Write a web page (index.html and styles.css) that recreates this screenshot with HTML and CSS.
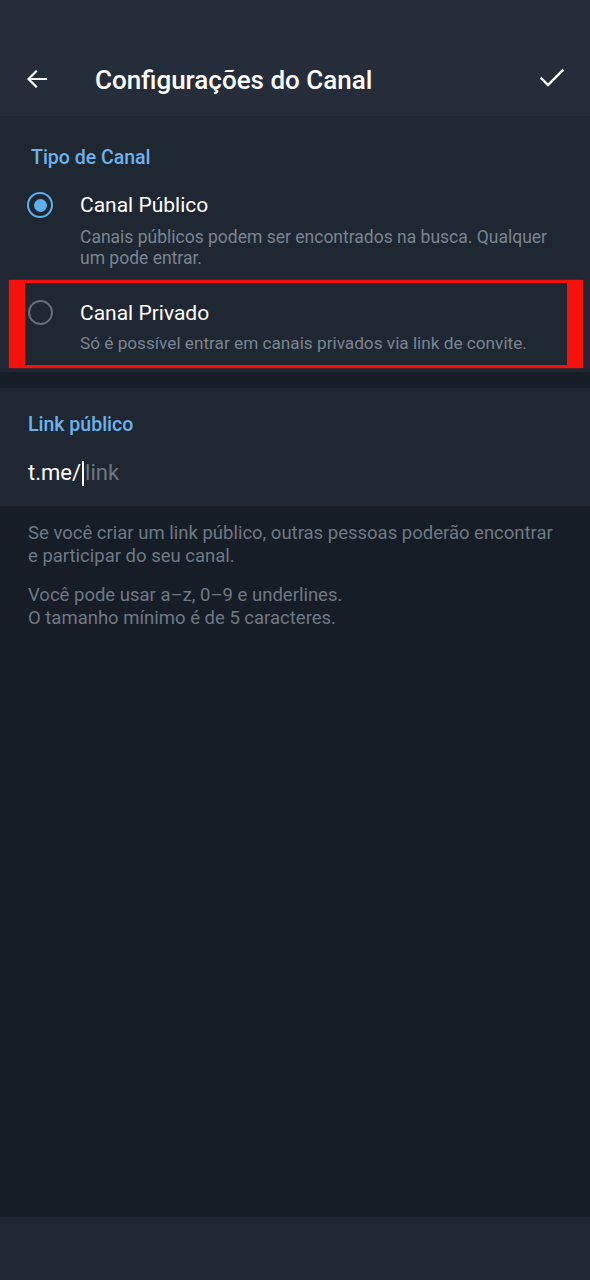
FILE: index.html
```html
<!DOCTYPE html>
<html lang="pt">
<head>
<meta charset="utf-8">
<title>Configurações do Canal</title>
<link rel="stylesheet" href="styles.css">
</head>
<body>
<div class="screen">
  <header class="appbar">
    <div class="toolbar">
      <button class="icon-btn back" aria-label="Voltar">
        <svg width="24" height="24" viewBox="0 0 24 24"><path d="M21 12H4M11 4.5L3.5 12L11 19.5" fill="none" stroke="#fff" stroke-width="2.2" stroke-linecap="square"/></svg>
      </button>
      <h1 class="title">Configurações do Canal</h1>
      <button class="icon-btn done" aria-label="Concluir">
        <svg width="26" height="26" viewBox="0 0 26 26"><path d="M2.5 13.5L9 20L23.5 5.5" fill="none" stroke="#fff" stroke-width="2.4" stroke-linecap="square"/></svg>
      </button>
    </div>
  </header>

  <main class="content">
    <section class="card type-card">
      <h2 class="section-title">Tipo de Canal</h2>
      <div class="option option-public">
        <span class="radio radio-on"><span class="dot"></span></span>
        <div class="option-text">
          <div class="option-title">Canal Público</div>
          <div class="option-desc">Canais públicos podem ser encontrados na busca. Qualquer um pode entrar.</div>
        </div>
      </div>
      <div class="option option-private">
        <span class="radio radio-off"></span>
        <div class="option-text">
          <div class="option-title">Canal Privado</div>
          <div class="option-desc">Só é possível entrar em canais privados via link de convite.</div>
        </div>
        <span class="highlight"></span>
      </div>
    </section>

    <section class="card link-card">
      <h2 class="section-title">Link público</h2>
      <div class="link-input"><span class="prefix">t.me/</span><span class="caret"></span><span class="placeholder">link</span></div>
    </section>

    <div class="help">
      <p>Se você criar um link público, outras pessoas poderão encontrar e participar do seu canal.</p>
      <p>Você pode usar a–z, 0–9 e underlines.<br>O tamanho mínimo é de 5 caracteres.</p>
    </div>
  </main>

  <footer class="navbar"></footer>
</div>
</body>
</html>
```

FILE: styles.css
```css
* { box-sizing: border-box; }
html, body { margin: 0; padding: 0; }
body {
  background: #161d27;
  font-family: Roboto, "Noto Sans", "Liberation Sans", sans-serif;
  color: #fff;
}
.screen {
  width: 590px;
  height: 1280px;
  display: flex;
  flex-direction: column;
  background: #161d27;
}
.appbar {
  background: #252d3a;
  padding-top: 40px;
  height: 116px;
}
.toolbar {
  height: 76px;
  display: flex;
  align-items: center;
  padding: 0 24px 0 24px;
}
.icon-btn {
  background: none;
  border: 0;
  padding: 0;
  display: flex;
  align-items: center;
  justify-content: center;
}
.back { width: 26px; height: 26px; margin-top: 2px; }
.title {
  margin: 3px 0 0 45px;
  font-size: 26px;
  font-weight: 500;
  flex: 1;
  line-height: 30px;
}
.done { width: 26px; height: 26px; margin-right: 1px; }

.content { flex: 1; }

.card { background: #1f2733; }
.type-card { padding: 30px 0 4px 0; }
.section-title {
  margin: 0;
  font-size: 19.5px;
  font-weight: 500;
  color: #6cb3ec;
  line-height: 24px;
}
.type-card .section-title { padding-left: 31px; }

.option {
  display: flex;
  align-items: flex-start;
  padding-left: 27px;
  padding-right: 30px;
}
.option-public { margin-top: 23px; }
.option-private { margin-top: 11px; padding-top: 21px; padding-bottom: 14px; position: relative; }
.option-text { margin-left: 27px; }
.option-title {
  font-size: 21px;
  line-height: 24px;
  color: #fff;
}
.option-desc {
  margin-top: 10px;
  font-size: 17.5px;
  line-height: 21px;
  color: #7a8591;
}
.option-private .option-desc { margin-top: 8px; font-size: 17.2px; }

.radio {
  width: 26px;
  height: 26px;
  border-radius: 50%;
  flex: none;
  display: flex;
  align-items: center;
  justify-content: center;
  margin-top: -1px;
}
.radio-on { border: 2.5px solid #5bb0f0; }
.radio-on .dot { width: 13px; height: 13px; border-radius: 50%; background: #5bb0f0; }
.radio-off { border: 2px solid #66707c; width: 25px; height: 25px; margin-left: 1px; }

.highlight {
  position: absolute;
  left: 9px;
  right: 7px;
  top: 0;
  bottom: 0;
  border-style: solid;
  border-color: #f5120c;
  border-width: 3px 16px 3px 16px;
  box-shadow: 0 0 2px rgba(245, 18, 12, 0.6);
  pointer-events: none;
}

.link-card { margin-top: 16px; padding: 25px 28px 19px 28px; height: 118px; }
.link-input {
  margin-top: 22px;
  display: flex;
  align-items: center;
  font-size: 22px;
  line-height: 28px;
  height: 28px;
}
.prefix { color: #fff; }
.caret { width: 2px; height: 25px; background: #fff; margin: 0 1px 0 1px; }
.placeholder { color: #6e7883; }

.help { padding: 16px 28px 0 28px; }
.help p {
  margin: 0 0 16px 0;
  font-size: 18.5px;
  line-height: 23px;
  color: #6e7985;
}

.navbar { height: 63px; background: #1e2733; flex: none; }
```
